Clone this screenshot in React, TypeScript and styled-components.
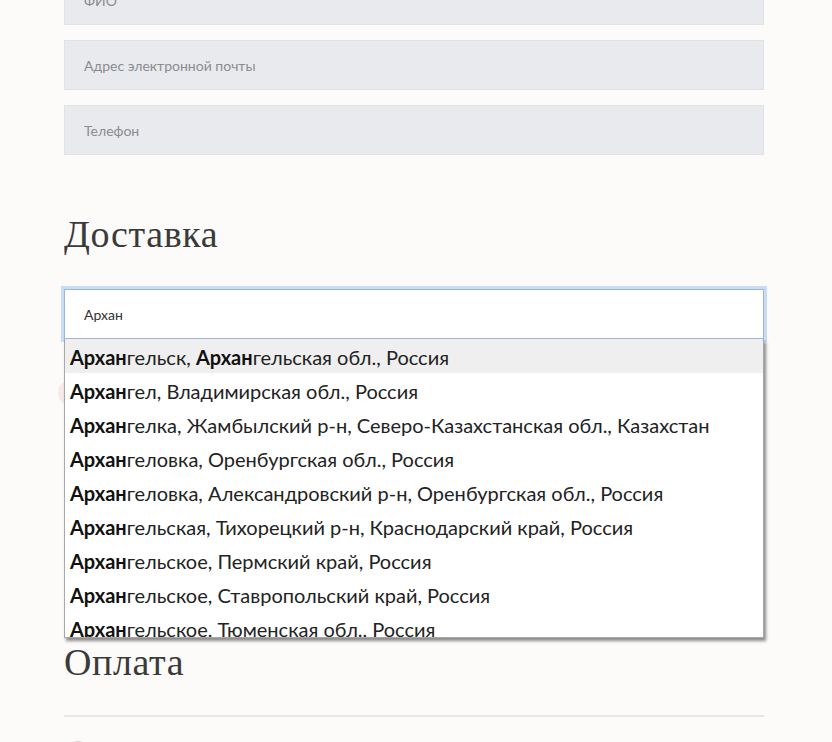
import React from 'react';
import styled, { createGlobalStyle } from 'styled-components';

const GlobalStyle = createGlobalStyle`
  html, body {
    margin: 0;
    padding: 0;
    background: #fcfbf9;
    font-family: Lato, "Noto Sans", sans-serif;
    overflow: hidden;
  }
`;

const Page = styled.div`
  padding: 0 68px 0 64px;
  height: 742px;
  overflow: hidden;
`;

const Form = styled.form`
  width: 700px;
  margin-top: -25px;
  display: flex;
  flex-direction: column;
`;

const Fields = styled.div`
  display: flex;
  flex-direction: column;
  gap: 15px;
`;

const Field = styled.input<{ $focused?: boolean }>`
  box-sizing: border-box;
  width: 100%;
  height: 50px;
  padding: 0 19px;
  border: 1px solid ${(p) => (p.$focused ? '#9bb7dc' : '#dfe2e6')};
  background: ${(p) => (p.$focused ? '#fff' : '#e8eaed')};
  box-shadow: ${(p) => (p.$focused ? '0 0 0 3px #c8dcf8' : 'none')};
  font-family: Lato, "Noto Sans", sans-serif;
  font-size: 14px;
  color: #333;
  outline: none;

  &::placeholder {
    color: #8a8c90;
  }
`;

const Heading = styled.h2<{ $top: number; $bottom: number }>`
  margin: ${(p) => p.$top}px 0 ${(p) => p.$bottom}px;
  font-family: "Liberation Serif", "DejaVu Serif", serif;
  font-weight: 400;
  font-size: 38px;
  line-height: 46px;
  color: #3a3a3a;
  letter-spacing: 0.6px;
`;

const AddressBox = styled.div`
  position: relative;
`;

const Suggestions = styled.ul`
  position: absolute;
  top: 50px;
  left: 0;
  right: 0;
  z-index: 5;
  margin: 0;
  padding: 0;
  list-style: none;
  height: 298px;
  overflow: hidden;
  background: #fff;
  border: 1px solid #a8a8a8;
  border-top: none;
  box-shadow: 2px 3px 3px rgba(0, 0, 0, 0.45);
`;

const Suggestion = styled.li<{ $active?: boolean }>`
  box-sizing: border-box;
  height: 34px;
  line-height: 34px;
  padding: 1px 5px 0;
  font-size: 20px;
  color: #222;
  white-space: nowrap;
  background: ${(p) => (p.$active ? '#efefef' : 'transparent')};

  b {
    font-weight: 700;
    color: #111;
  }
`;

const Options = styled.div`
  display: flex;
  flex-direction: column;
  gap: 22px;
  padding-top: 44px;
  height: 300px;
  box-sizing: border-box;
`;

const Option = styled.label`
  display: flex;
  align-items: center;
  gap: 14px;
  font-size: 16px;
  color: #333;
`;

const Radio = styled.span<{ $checked?: boolean; $size?: number }>`
  flex: none;
  width: ${(p) => p.$size ?? 12}px;
  height: ${(p) => p.$size ?? 12}px;
  border-radius: 50%;
  border: 1px solid #ddd3d1;
  background: ${(p) => (p.$checked ? '#f0dcd8' : '#f6f4f3')};
  box-shadow: ${(p) => (p.$checked ? '0 0 0 6px rgba(240, 214, 208, 0.45)' : 'none')};
`;

const Divider = styled.hr`
  margin: 0;
  border: none;
  border-top: 2px solid #e8e6e3;
`;

const PayList = styled.div`
  padding-top: 24px;
`;

const fields = ['ФИО', 'Адрес электронной почты', 'Телефон'];

const cities = [
  ['гельск, ', 'Архан', 'гельская обл., Россия'],
  ['гел, Владимирская обл., Россия'],
  ['гелка, Жамбылский р-н, Северо-Казахстанская обл., Казахстан'],
  ['геловка, Оренбургская обл., Россия'],
  ['геловка, Александровский р-н, Оренбургская обл., Россия'],
  ['гельская, Тихорецкий р-н, Краснодарский край, Россия'],
  ['гельское, Пермский край, Россия'],
  ['гельское, Ставропольский край, Россия'],
  ['гельское, Тюменская обл., Россия'],
];

export default function App() {
  return (
    <Page>
      <GlobalStyle />
      <Form>
        <Fields>
          {fields.map((f) => (
            <Field key={f} placeholder={f} readOnly />
          ))}
        </Fields>

        <Heading $top={56} $bottom={32}>Доставка</Heading>

        <AddressBox>
          <Field $focused defaultValue="Архан" />
          <Suggestions>
            {cities.map((parts, i) => (
              <Suggestion key={i} $active={i === 0}>
                <b>Архан</b>
                {parts[0]}
                {parts[1] && <b>{parts[1]}</b>}
                {parts[2]}
              </Suggestion>
            ))}
          </Suggestions>
        </AddressBox>

        <Options>
          <Option>
            <Radio $checked />
            Курьером до двери
          </Option>
          <Option>
            <Radio />
            Пункт выдачи
          </Option>
          <Option>
            <Radio />
            Почта России
          </Option>
        </Options>

        <Heading $top={0} $bottom={30}>Оплата</Heading>
        <Divider />
        <PayList>
          <Option>
            <Radio $size={26} />
            Картой онлайн
          </Option>
        </PayList>
      </Form>
    </Page>
  );
}
